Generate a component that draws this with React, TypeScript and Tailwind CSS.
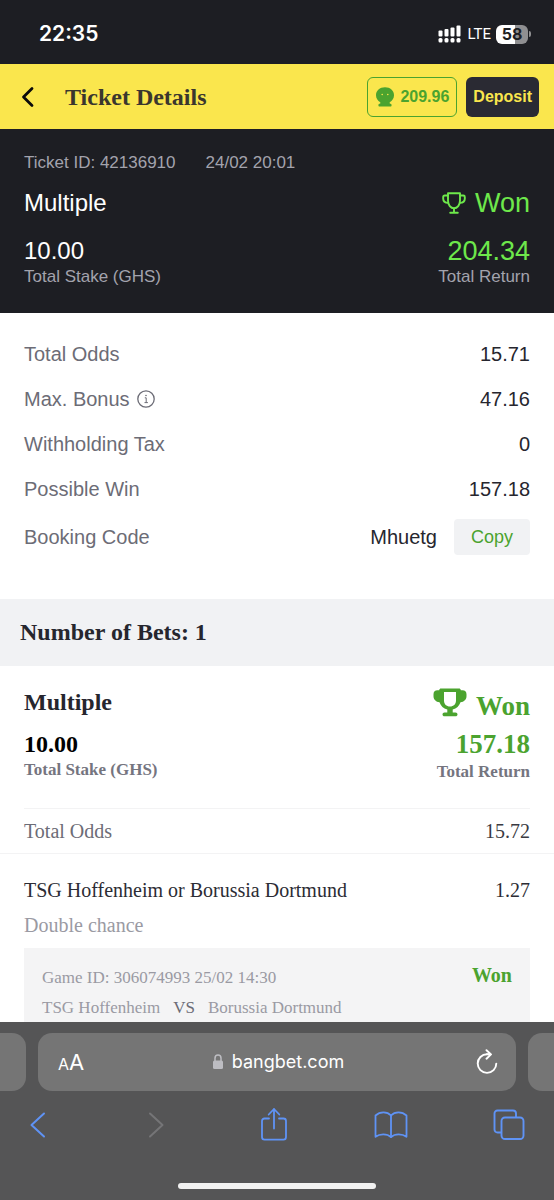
import React from "react";

const SANS = "font-['Liberation_Sans',Arial,sans-serif]";
const SERIF = "font-['Liberation_Serif','Times_New_Roman',serif]";

const summary = [
  { label: "Total Odds", value: "15.71" },
  { label: "Max. Bonus", value: "47.16", info: true },
  { label: "Withholding Tax", value: "0" },
  { label: "Possible Win", value: "157.18" },
];

const StatusBar = () => (
  <div className="flex h-16 shrink-0 items-center justify-between bg-[#1d1e23] pl-[39px] pr-[23px] pt-1 font-['Inter',sans-serif] text-white">
    <span className="text-[21px] font-semibold">22:35</span>
    <div className="flex items-center gap-[5px]">
      <svg width="24" height="18" viewBox="0 0 24 18" fill="white">
        <rect x="0.5" y="5.5" width="4" height="6" rx="1" />
        <rect x="6.5" y="4" width="4" height="7.5" rx="1" />
        <rect x="12.5" y="2.5" width="4" height="9" rx="1" />
        <rect x="18.5" y="0.5" width="4" height="11" rx="1" />
        <rect x="0.5" y="13" width="4" height="4.5" rx="1.5" />
        <rect x="6.5" y="13" width="4" height="4.5" rx="1.5" />
        <rect x="12.5" y="13" width="4" height="4.5" rx="1.5" />
        <rect x="18.5" y="13" width="4" height="4.5" rx="1.5" />
      </svg>
      <span className="font-['Roboto',sans-serif] text-[15px]">LTE</span>
      <div className="flex items-center gap-px">
        <div className="flex h-[19px] w-8 items-center justify-center rounded-md bg-linear-to-r from-white from-58% to-[#8f8f91] to-58% text-[16px] font-bold text-[#1d1e23]">
          58
        </div>
        <div className="h-[6px] w-[2px] rounded-r-full bg-[#8f8f91]" />
      </div>
    </div>
  </div>
);

const Header = () => (
  <header className="flex h-[65px] shrink-0 items-center bg-[#fae64d] pl-[21px] pr-[15px]">
    <button aria-label="Back" className="cursor-pointer">
      <svg width="14" height="22" viewBox="0 0 14 22" fill="none" stroke="#0b0b0b" strokeWidth="2.8" strokeLinecap="round" strokeLinejoin="round">
        <path d="M11 2.5 2.5 11 11 19.5" />
      </svg>
    </button>
    <h1 className={`${SERIF} ml-[30px] flex-1 text-2xl font-bold text-[#3a362e]`}>Ticket Details</h1>
    <div className={`${SANS} flex gap-[9px] text-base font-bold`}>
      <button className="flex h-10 cursor-pointer items-center gap-[5px] rounded-md border border-[#4ba32f] px-[7px] text-[#4ba32f]">
        <svg width="20" height="20" viewBox="0 0 20 20">
          <path
            d="M10 0.2c5.200 0 9 3.500 9 8 0 3-1.700 5.600-4.300 7v1.300c1.200 0.200 1.900 0.800 1.900 1.800 0 0.800-0.400 1.200-1.200 1.200H4.600c-0.800 0-1.200-0.400-1.200-1.200 0-1 0.700-1.600 1.900-1.800v-1.300C2.700 13.800 1 11.200 1 8.200c0-4.500 3.800-8 9-8Z"
            fill="#4ba32f"
          />
          <circle cx="7.2" cy="7.5" r="0.8" fill="#fae64d" />
          <circle cx="12.8" cy="7.5" r="0.8" fill="#fae64d" />
        </svg>
        209.96
      </button>
      <button className="h-10 cursor-pointer rounded-md bg-[#2a2a33] px-[7px] text-[#fae64d]">Deposit</button>
    </div>
  </header>
);

const TrophyOutline = () => (
  <svg width="24" height="22" viewBox="0 0 24 22" fill="none" stroke="currentColor" strokeWidth="1.9" strokeLinecap="round" strokeLinejoin="round">
    <path d="M6 1.200h12V8.500c0 4.600-2.700 7.800-6 7.800s-6-3.200-6-7.800Z" />
    <path d="M6 3.500H2.700C1.700 3.500 1.200 4 1.200 5v1.700c0 2.300 1.800 4 5 4.200" />
    <path d="M18 3.500h3.300c1 0 1.500 0.500 1.500 1.500v1.700c0 2.300-1.800 4-5 4.200" />
    <path d="M12 16.500v4M8.200 20.800h7.600" />
  </svg>
);

const TrophySolid = () => (
  <svg width="34" height="29" viewBox="0 0 34 29" fill="currentColor" className="mt-[2px]">
    <path
      fillRule="evenodd"
      d="M8 0.500h18c1 0 1.700 0.700 1.800 1.700h1.700c2.500 0 4 1.600 4 4v2c0 3.300-2.400 5.600-6 6.100-1.300 3.700-3.900 6.300-7.800 7.300v2.900h2.800c1.200 0 2 0.800 2 1.900 0 1.100-0.800 1.900-2 1.900H11.500c-1.200 0-2-0.800-2-1.900 0-1.100 0.800-1.900 2-1.900h2.800v-2.900c-3.900-1-6.500-3.600-7.800-7.300-3.600-0.500-6-2.800-6-6.100v-2c0-2.400 1.500-4 4-4h1.700C6.300 1.200 7 0.500 8 0.500ZM11 4v8.500c0 3.800 2.400 6 6 6s6-2.200 6-6V4Z"
    />
  </svg>
);

const TicketOverview = () => (
  <section className="bg-[#1d1e23] px-6 pb-[26px] pt-[22px] text-[17px] text-[#a3a3ad]">
    <div className="flex gap-[30px] leading-6">
      <span>Ticket ID: 42136910</span>
      <span>24/02 20:01</span>
    </div>
    <div className="mt-3 flex items-center justify-between leading-8">
      <span className="text-2xl leading-8 text-white">Multiple</span>
      <span className="flex items-center gap-[9px] text-[27px] text-[#6ee84b]">
        <TrophyOutline />
        Won
      </span>
    </div>
    <div className="mt-4 flex items-center justify-between leading-8">
      <span className="text-2xl leading-8 text-white">10.00</span>
      <span className="text-[27px] text-[#6ee84b]">204.34</span>
    </div>
    <div className="flex justify-between leading-5">
      <span>Total Stake (GHS)</span>
      <span>Total Return</span>
    </div>
  </section>
);

const Summary = () => (
  <dl className="px-6 pb-9 pt-[18px] text-xl">
    {summary.map((row) => (
      <div key={row.label} className="flex h-[45px] items-center justify-between">
        <dt className="flex items-center gap-[7px] text-[#6c6c76]">
          {row.label}
          {row.info && (
            <svg width="18" height="18" viewBox="0 0 18 18" fill="none" stroke="currentColor" strokeWidth="1.300">
              <circle cx="9" cy="9" r="8.200" />
              <path d="M7.800 7.800h1.400v4.700M7.500 12.600h3.400" strokeWidth="1" />
              <circle cx="9" cy="5.500" r="0.500" fill="currentColor" strokeWidth="0.600" />
            </svg>
          )}
        </dt>
        <dd className="text-[#26262e]">{row.value}</dd>
      </div>
    ))}
    <div className="flex h-[52px] items-center justify-between">
      <dt className="text-[#6c6c76]">Booking Code</dt>
      <dd className="flex items-center gap-[17px] text-[#26262e]">
        Mhuetg
        <button className="h-9 cursor-pointer rounded-sm bg-[#f1f2f4] px-[17px] text-lg text-[#4ba32f]">Copy</button>
      </dd>
    </div>
  </dl>
);

const BetCard = () => (
  <section className={SERIF}>
    <h2 className="bg-[#f1f2f4] px-5 py-[17px] text-2xl leading-[33px] font-bold text-[#26262e]">Number of Bets: 1</h2>
    <div className="px-6 pt-5">
      <div className="flex justify-between pb-6 font-bold">
        <div className="flex flex-col">
          <span className="text-2xl leading-8 text-[#26262e]">Multiple</span>
          <span className="mt-3 text-2xl leading-7 text-black">10.00</span>
          <span className="text-[17px] leading-6 text-[#75757f]">Total Stake (GHS)</span>
        </div>
        <div className="flex flex-col items-end text-[#4ba32f]">
          <div className="flex items-start gap-[9px] text-[27px] leading-10">
            <TrophySolid />
            <span>Won</span>
          </div>
          <span className="mt-0.5 text-[27px] leading-8">157.18</span>
          <span className="text-[17px] leading-6 text-[#75757f]">Total Return</span>
        </div>
      </div>
      <div className="flex h-[45px] items-center justify-between border-t border-[#f3f3f4] text-xl text-[#6c6c76]">
        <span>Total Odds</span>
        <span className="text-[#3a3a42]">15.72</span>
      </div>
    </div>
    <div className="border-t border-[#f3f3f4] px-6 pt-5">
      <div className="flex justify-between text-xl leading-8 text-[#2c2c34]">
        <span>TSG Hoffenheim or Borussia Dortmund</span>
        <span>1.27</span>
      </div>
      <p className="mt-1 text-xl leading-[30px] text-[#9a9aa3]">Double chance</p>
      <div className="mt-2 flex items-start justify-between bg-[#f4f4f5] px-[18px] pb-4 pt-[15px] text-[17px] leading-[30px] text-[#9a9aa3]">
        <div>
          <p>Game ID: 306074993 25/02 14:30</p>
          <p className="flex gap-[13px]">
            <span>TSG Hoffenheim</span>
            <span className="text-[#6c6c76]">VS</span>
            <span>Borussia Dortmund</span>
          </p>
        </div>
        <span className="text-xl leading-6 font-bold text-[#4ba32f]">Won</span>
      </div>
    </div>
  </section>
);

const BrowserBar = () => (
  <footer className="shrink-0 bg-[#555556] pb-[11px] pt-[11px]">
    <div className="flex gap-3 font-['Inter',sans-serif] text-white">
      <div className="w-[26px] rounded-r-[14px] bg-[#757575]" />
      <div className="flex h-[58px] flex-1 items-center justify-between rounded-[14px] bg-[#757575] pl-5 pr-[18px]">
        <button aria-label="Page settings" className="flex w-7 cursor-pointer items-baseline">
          <span className="text-base">A</span>
          <span className="text-[22px]">A</span>
        </button>
        <div className="flex items-center gap-2 text-lg">
          <svg width="12" height="16" viewBox="0 0 12 16">
            <rect x="1" y="6.500" width="10" height="8.500" rx="1.500" fill="#bdbdc2" />
            <path d="M3 7V4.200C3 2.300 4.200 1 6 1s3 1.300 3 3.200V7" fill="none" stroke="#bdbdc2" strokeWidth="1.500" />
          </svg>
          bangbet.com
        </div>
        <button aria-label="Reload" className="flex w-7 cursor-pointer justify-end">
          <svg width="22" height="26" viewBox="0 0 22 26" fill="none" stroke="white" strokeWidth="1.900" strokeLinecap="round" strokeLinejoin="round">
            <path d="M11 5.300a9.300 9.300 0 1 0 9.300 9.300" />
            <path d="M10.500 1.200 15 5.400l-4.500 4.300M11 5.300h3.800" />
          </svg>
        </button>
      </div>
      <div className="w-[26px] rounded-l-[14px] bg-[#757575]" />
    </div>
    <nav className="mt-4 flex h-9 items-center justify-between pl-[22px] pr-[29px] text-[#5f93f5]">
      <button aria-label="Previous page" className="flex w-8 cursor-pointer justify-center">
        <svg width="16" height="26" viewBox="0 0 16 26" fill="none" stroke="currentColor" strokeWidth="2" strokeLinecap="round" strokeLinejoin="round">
          <path d="M14 1.500 1.500 13 14 24.500" />
        </svg>
      </button>
      <button aria-label="Next page" disabled className="flex w-8 justify-center text-[#757577]">
        <svg width="16" height="26" viewBox="0 0 16 26" fill="none" stroke="currentColor" strokeWidth="2" strokeLinecap="round" strokeLinejoin="round">
          <path d="M2 1.500 14.500 13 2 24.500" />
        </svg>
      </button>
      <button aria-label="Share" className="flex w-8 cursor-pointer justify-center">
        <svg width="28" height="36" viewBox="0 0 28 36" fill="none" stroke="currentColor" strokeWidth="1.800" strokeLinecap="round" strokeLinejoin="round">
          <path d="M9 11.500H4.500c-1.500 0-2.500 1-2.500 2.500v16c0 1.700 1 2.700 2.500 2.700h19c1.500 0 2.500-1 2.500-2.700V14c0-1.500-1-2.500-2.500-2.500H19" />
          <path d="M14 21.500V2M8.700 7.500 14 2l5.300 5.500" />
        </svg>
      </button>
      <button aria-label="Bookmarks" className="flex w-8 cursor-pointer justify-center">
        <svg width="34" height="28" viewBox="0 0 34 28" fill="none" stroke="currentColor" strokeWidth="1.800" strokeLinecap="round" strokeLinejoin="round" className="shrink-0">
          <path d="M17 4.500v21.500" />
          <path d="M17 4.500C15 2.300 12.500 1.300 9.500 1.300 6.300 1.300 3.800 2.300 1.500 4.500v21.300c2.300-1.800 4.800-2.500 7.800-2.500 3 0 5.700 0.900 7.700 2.700 2-1.800 4.700-2.700 7.700-2.700 3 0 5.500 0.700 7.800 2.500V4.500C30.200 2.300 27.700 1.300 24.500 1.300 21.500 1.300 19 2.300 17 4.500Z" />
        </svg>
      </button>
      <button aria-label="Tabs" className="flex w-8 cursor-pointer justify-center">
        <svg width="32" height="32" viewBox="0 0 32 32" fill="none" stroke="currentColor" strokeWidth="1.900" strokeLinejoin="round">
          <path d="M8.500 23.500H4.500C2.700 23.500 1.500 22.300 1.500 20.500v-16C1.500 2.700 2.700 1.500 4.500 1.500h15.500c1.800 0 3 1.200 3 3v4" />
          <rect x="8.500" y="8.500" width="22" height="21.500" rx="3.500" />
        </svg>
      </button>
    </nav>
    <div className="mx-auto mt-10 h-[6px] w-[198px] rounded-full bg-[#f1f1f1]" />
  </footer>
);

export default function App() {
  return (
    <div className={`${SANS} flex h-screen flex-col bg-white`}>
      <StatusBar />
      <Header />
      <main className="min-h-0 flex-1 overflow-y-auto [scrollbar-width:none]">
        <TicketOverview />
        <Summary />
        <BetCard />
      </main>
      <BrowserBar />
    </div>
  );
}
